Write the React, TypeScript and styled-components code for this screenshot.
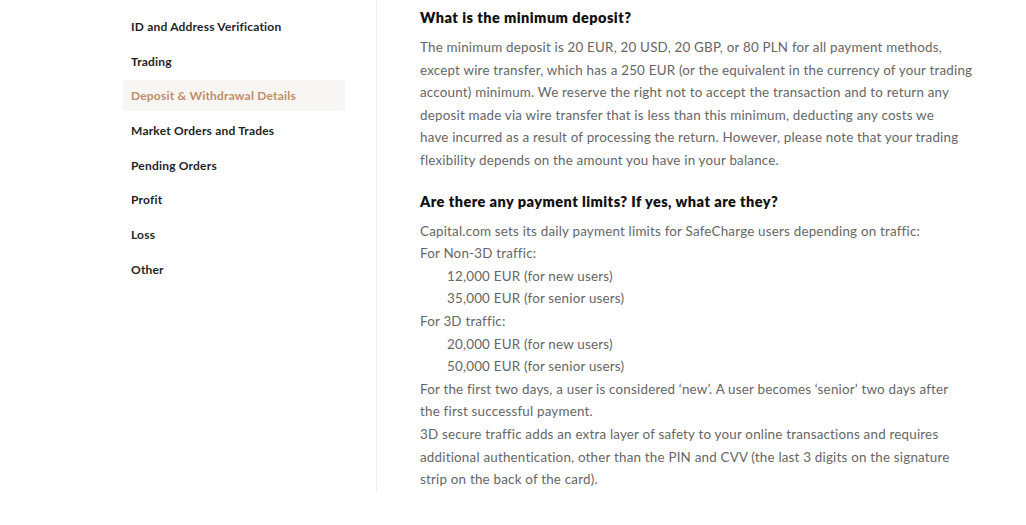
import React from 'react';
import styled, { createGlobalStyle } from 'styled-components';

const GlobalStyle = createGlobalStyle`
  html, body {
    margin: 0;
    padding: 0;
    background: #ffffff;
  }
  body {
    font-family: Lato, 'Noto Sans', sans-serif;
    -webkit-font-smoothing: antialiased;
  }
`;

const NAV_ITEMS = [
  'ID and Address Verification',
  'Trading',
  'Deposit & Withdrawal Details',
  'Market Orders and Trades',
  'Pending Orders',
  'Profit',
  'Loss',
  'Other',
];

const ACTIVE_ITEM = 'Deposit & Withdrawal Details';

const Page = styled.div`
  display: flex;
  align-items: flex-start;
  width: 1026px;
  height: 525px;
  padding-left: 123px;
  box-sizing: border-box;
  overflow: hidden;
`;

const Sidebar = styled.nav`
  display: flex;
  flex-direction: column;
  gap: 3.7px;
  width: 222px;
  padding-top: 11px;
`;

const NavItem = styled.div<{ $active?: boolean }>`
  display: flex;
  align-items: center;
  height: 31px;
  padding-left: 8px;
  border-radius: 2px;
  font-size: 12px;
  font-weight: 700;
  letter-spacing: 0.2px;
  color: ${({ $active }) => ($active ? '#c08e66' : '#1f1f1f')};
  background: ${({ $active }) => ($active ? '#f7f6f5' : 'transparent')};
  white-space: nowrap;
`;

const Divider = styled.div`
  width: 1px;
  height: 492px;
  margin-left: 31px;
  background: #efefef;
`;

const Content = styled.main`
  display: flex;
  flex-direction: column;
  padding-left: 43px;
  padding-top: 8px;
`;

const Question = styled.h3`
  margin: 0;
  font-size: 14.5px;
  font-weight: 800;
  line-height: 20px;
  letter-spacing: 0.45px;
  color: #111111;
  white-space: nowrap;
`;

const Answer = styled.div`
  margin: 8px 0 20px;
  font-size: 13.4px;
  line-height: 22.6px;
  letter-spacing: 0.2px;
  color: #666666;
  white-space: nowrap;
`;

const Line = styled.div<{ $indent?: boolean }>`
  padding-left: ${({ $indent }) => ($indent ? '27px' : '0')};
`;

const firstAnswer = [
  'The minimum deposit is 20 EUR, 20 USD, 20 GBP, or 80 PLN for all payment methods,',
  'except wire transfer, which has a 250 EUR (or the equivalent in the currency of your trading',
  'account) minimum. We reserve the right not to accept the transaction and to return any',
  'deposit made via wire transfer that is less than this minimum, deducting any costs we',
  'have incurred as a result of processing the return. However, please note that your trading',
  'flexibility depends on the amount you have in your balance.',
];

const secondAnswer: { text: string; indent?: boolean }[] = [
  { text: 'Capital.com sets its daily payment limits for SafeCharge users depending on traffic:' },
  { text: 'For Non-3D traffic:' },
  { text: '12,000 EUR (for new users)', indent: true },
  { text: '35,000 EUR (for senior users)', indent: true },
  { text: 'For 3D traffic:' },
  { text: '20,000 EUR (for new users)', indent: true },
  { text: '50,000 EUR (for senior users)', indent: true },
  { text: 'For the first two days, a user is considered \u2018new\u2019. A user becomes \u2018senior\u2019 two days after' },
  { text: 'the first successful payment.' },
  { text: '3D secure traffic adds an extra layer of safety to your online transactions and requires' },
  { text: 'additional authentication, other than the PIN and CVV (the last 3 digits on the signature' },
  { text: 'strip on the back of the card).' },
];

export default function App() {
  return (
    <>
      <GlobalStyle />
      <Page>
        <Sidebar>
          {NAV_ITEMS.map((item) => (
            <NavItem key={item} $active={item === ACTIVE_ITEM}>
              {item}
            </NavItem>
          ))}
        </Sidebar>
        <Divider />
        <Content>
          <Question>What is the minimum deposit?</Question>
          <Answer>
            {firstAnswer.map((l) => (
              <Line key={l}>{l}</Line>
            ))}
          </Answer>
          <Question>Are there any payment limits? If yes, what are they?</Question>
          <Answer>
            {secondAnswer.map((l) => (
              <Line key={l.text} $indent={l.indent}>
                {l.text}
              </Line>
            ))}
          </Answer>
        </Content>
      </Page>
    </>
  );
}
